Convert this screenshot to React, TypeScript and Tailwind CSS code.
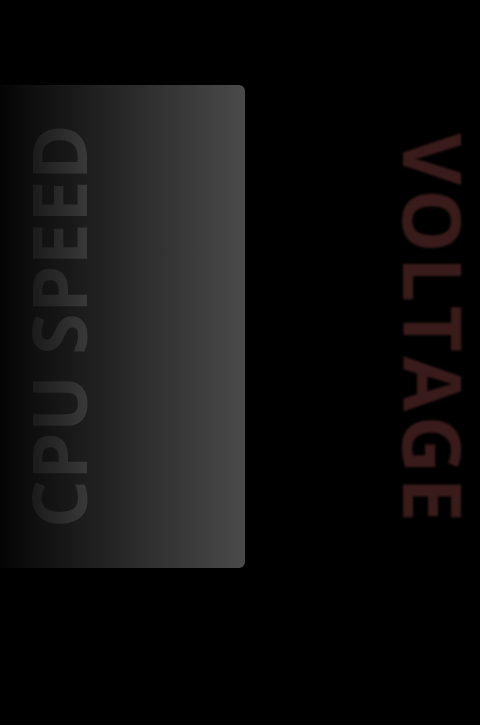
export default function App() {
  return (
    <div className="h-[725px] w-[480px] overflow-hidden bg-black flex items-start pt-[85px] font-['Open_Sans',sans-serif]">
      <div className="w-[245px] h-[483px] rounded-r-[6px] bg-[linear-gradient(to_right,#050505,#4a4a4a)] flex items-center justify-start pl-[20px]">
        <span className="[writing-mode:vertical-rl] rotate-180 text-[76px] font-bold leading-none bg-[linear-gradient(to_left,#141414,#3e3e3e)] bg-clip-text text-transparent">
          CPU SPEED
        </span>
      </div>
      <div className="ml-auto mr-[6px] h-[483px] flex items-center">
        <span className="[writing-mode:vertical-rl] text-[80px] font-bold leading-none tracking-[4px] text-[#3a1b1b] blur-[1.2px] pt-[6px]">
          VOLTAGE
        </span>
      </div>
    </div>
  )
}
